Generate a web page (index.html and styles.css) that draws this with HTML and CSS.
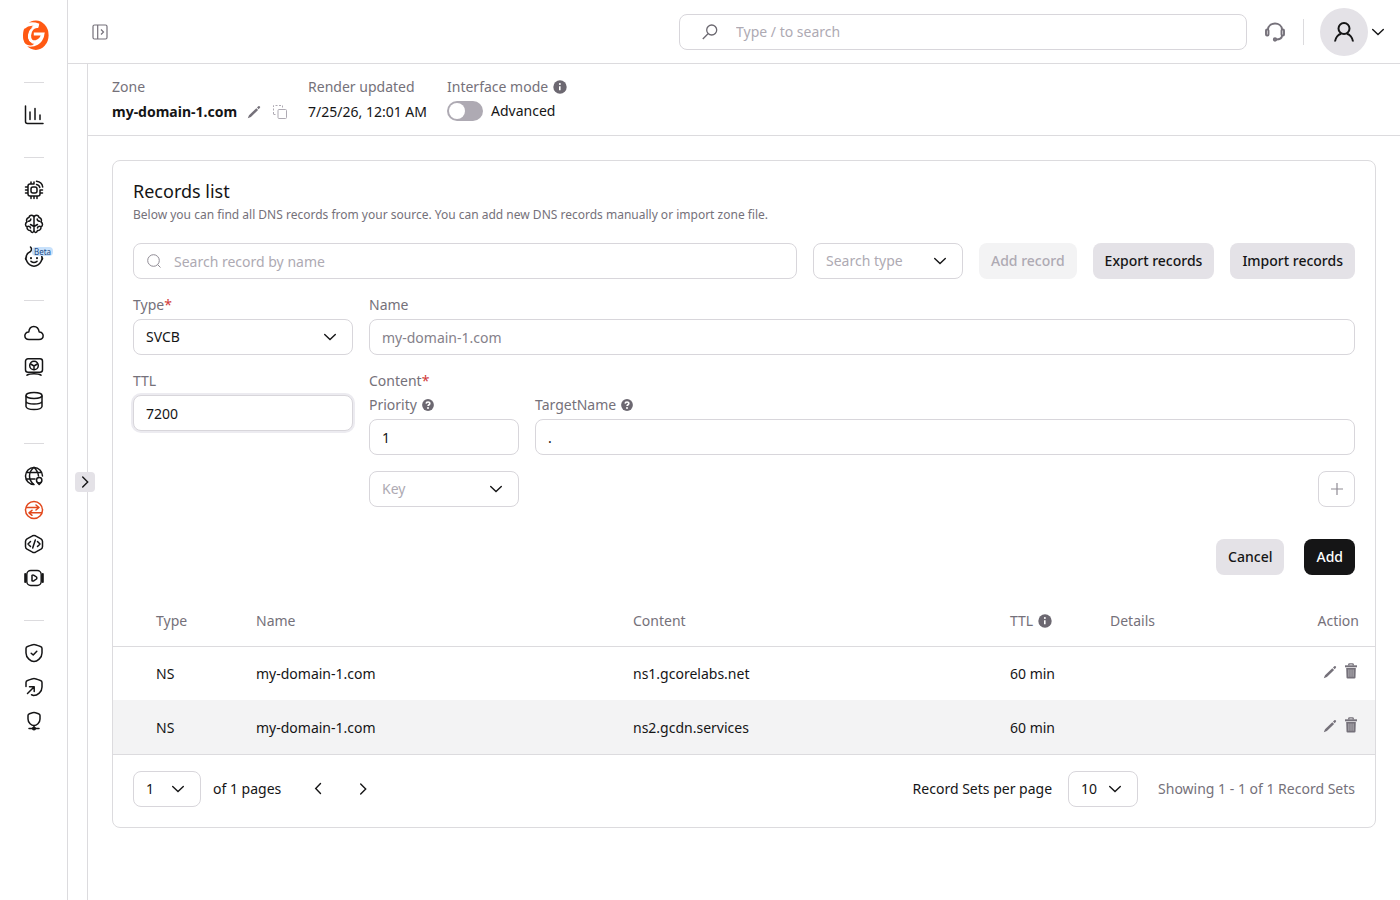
FILE: index.html
```html
<!DOCTYPE html>
<html lang="en">
<head>
<meta charset="utf-8">
<title>DNS - my-domain-1.com</title>
<meta name="viewport" content="width=device-width, initial-scale=1">
<link rel="stylesheet" href="styles.css">
</head>
<body>

<!-- shared icons -->
<svg class="defs" aria-hidden="true">
	<symbol id="i-down" viewBox="0 0 14 14"><path d="M1.700 4.500 7 9.500l5.300-5" fill="none" stroke="currentColor" stroke-width="1.400" stroke-linecap="round"/></symbol>
	<symbol id="i-right" viewBox="0 0 14 14"><path d="M4.700 2 9.700 7l-5 5" fill="none" stroke="currentColor" stroke-width="1.400" stroke-linecap="round"/></symbol>
	<symbol id="i-left" viewBox="0 0 14 14"><path d="M9.500 1.500 4.700 6.500l4.800 5" fill="none" stroke="currentColor" stroke-width="1.400" stroke-linecap="round"/></symbol>
	<symbol id="i-pencil" viewBox="0 0 14 14"><path d="M.8 13.300 2 10.200 9.300 3.200l1.800 1.700L3.900 12zM10 2.500 11.300 1.200q.6-.5 1.200 0l.4.400q.6.600 0 1.200L11.700 4.200z" fill="currentColor"/></symbol>
	<symbol id="i-trash" viewBox="0 0 12 16"><path d="M3.800 2.500V1.600Q3.800.9 4.500.9h3q.7 0 .7.700v.9" fill="none" stroke="currentColor" stroke-width="1.400"/><path d="M0 2.300h12v2H0z" fill="currentColor"/><path d="M1.200 5h9.600l-.3 9.500q-.1 1-1.100 1H2.600q-1 0-1.100-1z" fill="currentColor"/><path d="M3.900 6.500v7.300M6 6.500v7.300M8.100 6.500v7.300" stroke="#fff" stroke-opacity=".6" stroke-width=".8"/></symbol>
	<symbol id="i-info" viewBox="0 0 14 14"><circle cx="7" cy="7" r="6.700" fill="currentColor"/><path d="M6.800 6.200v4" stroke="#fff" stroke-width="1.600"/><circle cx="6.900" cy="4" r="1" fill="#fff"/></symbol>
	<symbol id="i-help" viewBox="0 0 12 12"><circle cx="6" cy="6" r="5.900" fill="currentColor"/><path d="M4.200 4.600c.1-2.200 3.700-2.100 3.600 0 0 1.200-1.700 1.100-1.700 2.500" fill="none" stroke="#fff" stroke-width="1.700"/><circle cx="6" cy="9" r="1" fill="#fff"/></symbol>
</svg>

<div class="app">
	<nav class="sidebar" aria-label="Products">
		<a class="logo" href="#" aria-label="Home">
			<svg width="26" height="30" viewBox="0 0 26 30">
				<ellipse cx="12.800" cy="15.200" rx="12.800" ry="14.700" fill="#ff5913"/>
				<g fill="none" stroke="#fff">
					<path d="M15.800 5.300C9 2.800 3.500 4.500.5 7.500" stroke-width="3.400"/>
					<path d="M15.500 6.500C10 5.500 6.800 10 6.500 15.500c-.3 5 3 7.200 6.500 6.200 4-1.200 6-4.200 6.800-7.700h-9" stroke-width="3.200"/>
					<path d="M20 14.500c-1.500 8-8 12.700-18.500 10" stroke-width="2.800"/>
				</g>
				<path d="M3.500 8C-.8 12.500-.5 20 2.500 23.800c2.500 2 6 2 8.500.700C5.500 23 4.200 18 5 14c.7-3 2.200-5 4.500-6.500C7.500 7 5.500 7 3.500 8z" fill="#ff5913"/>
			</svg>
		</a>
		<div class="nav-group">
			<a href="#" aria-label="Dashboard"><svg viewBox="0 0 20 20"><path d="M1.500 1v15.500q0 2 2 2H19M6 14.500V7M11 14.500V3.500M16 14.500V10"/></svg></a>
		</div>
		<div class="nav-group">
			<a href="#" aria-label="Edge AI"><svg viewBox="0 0 20 20"><path d="M10 4H6Q4 4 4 6v8q0 2 2 2h8q2 0 2-2v-4M7 4V2M10 4V2M4 7H1.500M4 10H1.500M4 13H1.500M7 16v2.500M10 16v2.500M13 16v2.500M16 13h2.500M16 10h2.500"/><rect x="7" y="7" width="6" height="6" rx="2"/><path d="M12.500 1.300q5.500.7 6.200 5.700M12.500 4.500q2.800.5 3.300 3"/></svg></a>
			<a href="#" aria-label="Inference"><svg viewBox="0 0 20 20"><path d="M10 3.500C9.500.5 5.500.5 5 3.500 2.500 4 2 6.500 3 8c-2 1.200-2 4 0 5-.2 2.500 1.800 3.800 3.500 3.500C7.300 19.300 10 19 10 16zM10 3.500c.5-3 4.500-3 5 0 2.500.5 3 3 2 4.500 2 1.200 2 4 0 5 .2 2.500-1.800 3.800-3.500 3.500-.8 2.800-3.500 2.500-3.500-.5M10 12.500l-3.500-2M10 12.500l3.500-2M6.500 14q0-1.800-2.500-1.800M13.500 14q0-1.800 2.500-1.800M6.800 5q0 2-2.300 2.300M13.200 5q0 2 2.300 2.300"/></svg></a>
			<a href="#" aria-label="Beta service"><svg viewBox="0 0 20 20"><path d="M6.500 3.500C2 5.500 1 10 3 13.700c3.300 5.900 10.700 5.900 14 0C18.300 11.300 18.200 9 17.500 7.500M6.500 3.500Q8.500 1 6.500-1M2.500 9Q.5 10.500 2.700 12.500M17.800 9q1.700 1.500-.5 3.500M7 13.300q3 2.400 6 0"/><path d="M7 10v.3M13 10v.3" stroke-width="2"/></svg><span class="beta">Beta</span></a>
		</div>
		<div class="nav-group">
			<a href="#" aria-label="Cloud"><svg viewBox="0 0 20 20"><path d="M5 16.500C-.5 16.500-.5 9 4.800 9 5.500 1.800 14 1.800 15.200 9c5.300 0 5.300 7.500-.2 7.500z"/></svg></a>
			<a href="#" aria-label="Hosting"><svg viewBox="0 0 20 20"><rect x="1.500" y="1.800" width="17" height="13.500" rx="2.500"/><circle cx="10" cy="8.500" r="4.300"/><path d="M10 9v3.500M10 9 6.700 7M10 9l3.300-2M3 18.200q2-1.400 7-1.400t7 1.400" /></svg></a>
			<a href="#" aria-label="Storage"><svg viewBox="0 0 20 20"><path d="M2 5v10.500Q2.500 18.500 10 18.500T18 15.500V5M2 10.500Q3 13 10 13t8-2.500"/><ellipse cx="10" cy="4.500" rx="8" ry="3"/></svg></a>
		</div>
		<div class="nav-group">
			<a href="#" aria-label="CDN"><svg viewBox="0 0 20 20"><path d="M10 18.500A8.500 8.500 0 1 1 18.500 10M10 1.500C4 6 4 14 10 18.500M10 1.500Q14 5 14.500 10M2.500 6.500h15M2 13h9"/><circle cx="15.200" cy="14.200" r="2.700"/><path d="M13.500 16.500 15.200 18.500 17 16.500"/></svg></a>
			<a class="active" href="#" aria-label="DNS"><svg viewBox="0 0 20 20"><circle cx="10" cy="10" r="8.500"/><path d="M2.500 7.500h12.500M12 5l3 2.500-3 2.500M17.500 12.800H5M8 10.300l-3 2.500 3 2.500"/></svg></a>
			<a href="#" aria-label="FastEdge"><svg viewBox="0 0 20 20"><path d="M8.500 1.800q1.500-.7 3 0l5.500 3q1.500 1 1.500 2.700v5q0 1.700-1.500 2.700l-5.500 3q-1.500.7-3 0l-5.500-3Q1.500 14.200 1.500 12.500v-5Q1.500 5.800 3 4.800zM6.500 7.500 4 10l2.500 2.500M13.500 7.500 16 10l-2.500 2.500M11.300 6 8.700 14"/></svg></a>
			<a href="#" aria-label="Streaming"><svg viewBox="0 0 20 20"><rect x="2.800" y="2.500" width="14.400" height="15" rx="4"/><path d="M1.200 6v8M18.800 6v8" stroke-width="2"/><path d="M8 7.300v5.400q1 .4 2 0l2.500-1.700q.8-1 0-2L10 7.300q-1-.5-2 0z"/></svg></a>
		</div>
		<div class="nav-group">
			<a href="#" aria-label="WAAP"><svg viewBox="0 0 20 20"><path d="M10 1.500q1 0 6.500 2 1.500.5 1.500 2V10c0 5-5 8.500-8 8.500S2 15 2 10V5.500q0-1.500 1.500-2Q9 1.500 10 1.500zM7.200 10.200l2 1.800 3.600-3.800"/></svg></a>
			<a href="#" aria-label="DDoS protection"><svg viewBox="0 0 20 20"><path d="M2 9.500v-4q0-1.500 1.500-2Q9 1.500 10 1.500t6.500 2q1.500.5 1.500 2V10c0 5-4.500 8.500-8.500 8.500L7.500 17.800M3.500 16.500 10 10M5.500 9.800H10.200v4.700"/></svg></a>
			<a href="#" aria-label="Network protection"><svg viewBox="0 0 20 20"><path d="M10 1.500q.8 0 4.500 1.300Q16 3.300 16 4.500V8c0 4-3.500 6.500-6 6.500S4 12 4 8V4.500Q4 3.300 5.500 2.800 9.200 1.500 10 1.500zM10 14.500V16M5 17.500h10"/><circle cx="10" cy="17.500" r="1.300"/></svg></a>
		</div>
	</nav>

	<div class="main">
		<header class="topbar">
			<button class="icon-btn" type="button" aria-label="Expand menu">
				<svg width="16" height="16" viewBox="0 0 16 16" fill="none" stroke="currentColor" stroke-width="1.200"><rect x="1" y="1" width="14" height="14" rx="1.500"/><path d="M5.700 1v14M9 5.500 11.500 8 9 10.500"/></svg>
			</button>
			<label class="field-icon global-search">
				<svg width="16" height="16" viewBox="0 0 16 16" fill="none" stroke="#6b6870" stroke-width="1.300"><circle cx="9.700" cy="6" r="5"/><path d="M6 9.700.8 15"/></svg>
				<input type="text" placeholder="Type / to search" aria-label="Search">
			</label>
			<button class="icon-btn support" type="button" aria-label="Support">
				<svg width="22" height="22" viewBox="0 0 22 22" fill="none" stroke="currentColor" stroke-width="1.900"><path d="M4 8.500C4.500.5 17.500.5 18 8.500M18 14.500Q18 18.500 12 18.500"/><rect x="2" y="8.500" width="2.500" height="6" rx="1"/><rect x="17.500" y="8.500" width="2.500" height="6" rx="1"/><circle cx="11" cy="18.500" r="1.200"/></svg>
			</button>
			<button class="account" type="button" aria-label="Account">
				<span class="avatar"><svg width="22" height="22" viewBox="0 0 22 22" fill="none" stroke="currentColor" stroke-width="2"><circle cx="11" cy="7.500" r="5.500"/><path d="M2 20.500c.5-4 3.500-7 6-7.800M20 20.500c-.5-4-3.500-7-6-7.800"/></svg></span>
				<svg width="14" height="14"><use href="#i-down"/></svg>
			</button>
		</header>

		<div class="body">
			<aside class="rail"><button type="button" aria-label="Show menu"><svg width="14" height="14"><use href="#i-right"/></svg></button></aside>

			<main class="page">
				<div class="zone-bar">
					<div class="zone-item">
						<span class="muted">Zone</span>
						<div class="zone-value">
							<b>my-domain-1.com</b>
							<button class="icon-btn" type="button" aria-label="Edit zone"><svg width="14" height="14"><use href="#i-pencil"/></svg></button>
							<button class="icon-btn copy" type="button" aria-label="Copy zone"><svg width="14" height="14" viewBox="0 0 14 14" fill="none" stroke="currentColor"><rect x="5" y="4.500" width="8.500" height="9" rx="1"/><path d="M.5 9V.5H9.500V3M.5 9.500H3" stroke-dasharray="2 1.500"/></svg></button>
						</div>
					</div>
					<div class="zone-item">
						<span class="muted">Render updated</span>
						<span class="zone-value">7/25/26, 12:01 AM</span>
					</div>
					<div class="zone-item">
						<span class="muted with-icon">Interface mode <svg width="14" height="14"><use href="#i-info"/></svg></span>
						<label class="switch"><input type="checkbox" role="switch">Advanced</label>
					</div>
				</div>

				<section class="card">
					<div class="card-body">
						<h2>Records list</h2>
						<p class="hint">Below you can find all DNS records from your source. You can add new DNS records manually or import zone file.</p>

						<div class="toolbar">
							<label class="field-icon record-search">
								<svg width="14" height="14" viewBox="0 0 14 14" fill="none" stroke="#8f8b94"><circle cx="6.500" cy="6.500" r="5.800"/><path d="m10.700 10.700 2.800 2.800"/></svg>
								<input type="text" placeholder="Search record by name" aria-label="Search record by name">
							</label>
							<span class="select short empty"><select aria-label="Search type"><option>Search type</option></select><svg><use href="#i-down"/></svg></span>
							<button class="btn" type="button" disabled>Add record</button>
							<button class="btn" type="button">Export records</button>
							<button class="btn" type="button">Import records</button>
						</div>

						<form class="record-form">
							<div class="field">
								<label for="type">Type<i>*</i></label>
								<span class="select"><select id="type"><option>SVCB</option></select><svg><use href="#i-down"/></svg></span>
							</div>
							<div class="field">
								<label for="name">Name</label>
								<input class="name" type="text" id="name" placeholder="my-domain-1.com">
							</div>
							<div class="field">
								<label for="ttl">TTL</label>
								<input class="focused" type="text" id="ttl" value="7200">
							</div>
							<div class="field">
								<span class="muted">Content<i>*</i></span>
								<div class="content-grid">
									<div class="field">
										<label class="with-icon" for="priority">Priority <svg width="12" height="12"><use href="#i-help"/></svg></label>
										<input type="text" id="priority" value="1">
									</div>
									<div class="field">
										<label class="with-icon" for="target">TargetName <svg width="12" height="12"><use href="#i-help"/></svg></label>
										<input type="text" id="target" value=".">
									</div>
									<span class="select empty"><select aria-label="Key"><option>Key</option></select><svg><use href="#i-down"/></svg></span>
									<button class="plus" type="button" aria-label="Add param"><svg width="14" height="14" viewBox="0 0 14 14"><path d="M7 1v12M1 7h12" stroke="currentColor" stroke-width="1.200"/></svg></button>
								</div>
							</div>
							<div class="form-actions">
								<button class="btn" type="button">Cancel</button>
								<button class="btn dark" type="button">Add</button>
							</div>
						</form>
					</div>

					<table>
						<colgroup><col class="c-pad"><col class="c-small"><col class="c-big"><col class="c-big"><col class="c-small"><col><col class="c-small"></colgroup>
						<thead>
							<tr><th></th><th>Type</th><th>Name</th><th>Content</th><th><span class="with-icon">TTL <svg width="14" height="14"><use href="#i-info"/></svg></span></th><th>Details</th><th class="action">Action</th></tr>
						</thead>
						<tbody>
							<tr>
								<td></td><td>NS</td><td>my-domain-1.com</td><td>ns1.gcorelabs.net</td><td>60 min</td><td></td>
								<td><div class="row-actions">
									<button class="icon-btn" type="button" aria-label="Edit"><svg width="14" height="14"><use href="#i-pencil"/></svg></button>
									<button class="icon-btn" type="button" aria-label="Delete"><svg width="12" height="16"><use href="#i-trash"/></svg></button>
								</div></td>
							</tr>
							<tr>
								<td></td><td>NS</td><td>my-domain-1.com</td><td>ns2.gcdn.services</td><td>60 min</td><td></td>
								<td><div class="row-actions">
									<button class="icon-btn" type="button" aria-label="Edit"><svg width="14" height="14"><use href="#i-pencil"/></svg></button>
									<button class="icon-btn" type="button" aria-label="Delete"><svg width="12" height="16"><use href="#i-trash"/></svg></button>
								</div></td>
							</tr>
						</tbody>
					</table>

					<div class="pager">
						<span class="select page-num"><select aria-label="Page"><option>1</option></select><svg><use href="#i-down"/></svg></span>
						<span>of 1 pages</span>
						<button class="icon-btn prev" type="button" aria-label="Previous page"><svg width="14" height="14"><use href="#i-left"/></svg></button>
						<button class="icon-btn next" type="button" aria-label="Next page"><svg width="14" height="14"><use href="#i-right"/></svg></button>
						<label class="per-page" for="perpage">Record Sets per page</label>
						<span class="select page-size"><select id="perpage"><option>10</option></select><svg><use href="#i-down"/></svg></span>
						<span class="muted total">Showing 1 - 1 of 1 Record Sets</span>
					</div>
				</section>
			</main>
		</div>
	</div>
</div>

</body>
</html>
```
FILE: styles.css
```css
* {
	box-sizing: border-box;
}
body {
	margin: 0;
	background: #fff;
	color: #151516;
	font: 14px/20px "Noto Sans", sans-serif;
}
button, input, select {
	font: inherit;
	color: inherit;
	margin: 0;
}
button {
	padding: 0;
	border: 0;
	background: none;
	cursor: pointer;
}
svg {
	display: block;
	flex: none;
}
.defs {
	display: none;
}
.app {
	display: flex;
	min-height: 100vh;
}

/* sidebar */
.sidebar {
	flex: none;
	width: 68px;
	padding-top: 20px;
	border-right: 1px solid #dcdbde;
}
.logo {
	display: flex;
	height: 62px;
	padding-left: 23px;
}
.nav-group {
	width: 20px;
	margin: 0 24px;
	padding: 15px 0 25px;
	border-top: 1px solid #dcdbde;
}
.nav-group a {
	position: relative;
	display: flex;
	align-items: center;
	height: 34px;
	color: #151516;
}
.nav-group svg {
	width: 20px;
	height: 20px;
	overflow: visible;
	fill: none;
	stroke: currentColor;
	stroke-width: 1.5;
	stroke-linecap: round;
	stroke-linejoin: round;
}
.nav-group a.active {
	color: #e2491d;
}
.beta {
	position: absolute;
	top: 6px;
	left: 8px;
	padding: 0 2px;
	border-radius: 4px;
	background: #c8e1fb;
	color: #1f4a83;
	font-size: 8px;
	line-height: 9px;
}

/* top bar */
.main {
	flex: 1;
	display: flex;
	flex-direction: column;
	min-width: 0;
}
.topbar {
	display: flex;
	align-items: center;
	height: 64px;
	padding: 0 15px 0 24px;
	border-bottom: 1px solid #dcdbde;
}
.icon-btn {
	display: flex;
	color: #75717a;
}
.global-search {
	width: 568px;
	margin-left: auto;
}
.support {
	margin: 0 17px;
}
.account {
	display: flex;
	align-items: center;
	gap: 3px;
}
.account::before {
	content: "";
	height: 26px;
	margin-right: 16px;
	margin-right: 13px;
	border-left: 1px solid #dcdbde;
}
.avatar {
	display: flex;
	align-items: center;
	justify-content: center;
	width: 48px;
	height: 48px;
	border-radius: 50%;
	background: #e4e2e7;
}

.body {
	flex: 1;
	display: flex;
}
.rail {
	position: relative;
	flex: none;
	width: 20px;
	border-right: 1px solid #dcdbde;
}
.rail button {
	position: absolute;
	top: 408px;
	left: 7px;
	width: 20px;
	height: 20px;
	padding: 3px;
	border-radius: 4px;
	background: #e4e2e7;
}
.page {
	flex: 1;
	min-width: 0;
}

/* zone info */
.zone-bar {
	display: flex;
	gap: 20px;
	padding: 13px 24px 14px;
	border-bottom: 1px solid #dcdbde;
}
.zone-item {
	display: flex;
	flex-direction: column;
	gap: 4px;
}
.zone-value {
	display: flex;
	align-items: center;
	gap: 10px;
	height: 20px;
	padding-top: 2px;
}
.copy {
	margin: 0 1px 0 2px;
	color: #aeaab3;
}
.muted, label {
	color: #75717a;
}
.with-icon {
	display: flex;
	align-items: center;
	gap: 5px;
}
.with-icon svg {
	color: #6c6871;
}
.switch {
	display: flex;
	align-items: center;
	gap: 8px;
	color: #151516;
}
.switch input {
	appearance: none;
	width: 36px;
	height: 20px;
	padding: 2px;
	border-radius: 10px;
	background: #aeaab3;
}
.switch input::before {
	content: "";
	display: block;
	width: 16px;
	height: 16px;
	border-radius: 50%;
	background: #fff;
}
.switch input:checked::before {
	margin-left: auto;
}

/* fields */
input[type=text], select {
	width: 100%;
	height: 36px;
	padding: 0 12px;
	border: 1px solid #d8d6db;
	border-radius: 8px;
	background: #fff;
	outline: none;
}
select {
	appearance: none;
	grid-area: 1 / 1;
	padding-right: 32px;
}
::placeholder {
	color: #aeaab3;
	opacity: 1;
}
.name::placeholder {
	color: #85818a;
}
input:focus, input.focused {
	box-shadow: 0 0 0 2px #ecebf0;
}
.select {
	display: grid;
	align-items: center;
}
.select svg {
	grid-area: 1 / 1;
	justify-self: end;
	width: 14px;
	height: 14px;
	margin-right: 16px;
	pointer-events: none;
}
.empty select {
	color: #aeaab3;
}
.field-icon {
	display: grid;
	align-items: center;
}
.field-icon svg, .field-icon input {
	grid-area: 1 / 1;
}
.field-icon svg {
	z-index: 1;
	margin-left: 14px;
}
.record-search {
	flex: 1;
}
.record-search input[type=text] {
	padding-left: 40px;
}
.global-search svg {
	margin-left: 23px;
}
.global-search input[type=text] {
	padding-left: 56px;
}
.btn {
	height: 36px;
	padding: 0 12px;
	border-radius: 8px;
	background: #e4e2e7;
	font-weight: 500;
	white-space: nowrap;
}
.btn:disabled {
	background: #f3f3f4;
	color: #aeaab3;
}
.btn.dark {
	background: #151516;
	color: #fff;
}

/* records */
.card {
	margin: 24px;
	border: 1px solid #dcdbde;
	border-radius: 8px;
}
.card-body {
	padding: 20px;
}
h2 {
	margin: 0 0 4px;
	font-size: 18px;
	line-height: 20px;
	font-weight: 400;
}
.hint {
	margin: 0 0 18px;
	color: #75717a;
	font-size: 12px;
	line-height: 20px;
}
.toolbar {
	display: flex;
	gap: 16px;
}
.short {
	width: 150px;
}
.record-form {
	display: grid;
	grid-template-columns: 220px 1fr;
	gap: 16px;
	margin-top: 16px;
}
.field {
	display: flex;
	flex-direction: column;
	gap: 4px;
}
.field i {
	color: #d13b3b;
	font-style: normal;
}
.content-grid {
	display: grid;
	grid-template-columns: 150px 1fr;
	gap: 16px;
}
.plus {
	display: flex;
	align-items: center;
	justify-content: center;
	justify-self: end;
	width: 37px;
	height: 36px;
	border: 1px solid #d8d6db;
	border-radius: 8px;
	color: #8f8b94;
}
.form-actions {
	grid-column: 1 / -1;
	display: flex;
	justify-content: flex-end;
	gap: 20px;
	margin-top: 16px;
}
table {
	width: 100%;
	table-layout: fixed;
	border-collapse: collapse;
}
.c-pad {
	width: 27px;
}
.c-small {
	width: 100px;
}
.c-big {
	width: 377px;
}
th, td {
	height: 54px;
	padding: 2px 0 0 16px;
	text-align: left;
}
th {
	height: 51px;
	border-bottom: 1px solid #dcdbde;
	color: #75717a;
	font-weight: 400;
}
th.action {
	padding-right: 16px;
	text-align: right;
}
tbody tr:nth-child(even) {
	background: #f3f3f4;
}
tbody tr:last-child {
	border-bottom: 1px solid #dcdbde;
}
.row-actions {
	display: flex;
	justify-content: flex-end;
	gap: 8px;
	align-items: flex-end;
	padding: 0 18px 6px 0;
}
.pager {
	display: flex;
	align-items: center;
	padding: 16px 20px 20px;
}
.page-num {
	width: 68px;
	margin-right: 12px;
}
.prev {
	margin: 0 31px 0 30px;
}
.prev, .next {
	color: #151516;
}
.per-page {
	margin-left: auto;
	color: #151516;
}
.page-size {
	width: 70px;
	margin: 0 20px 0 16px;
}
```
